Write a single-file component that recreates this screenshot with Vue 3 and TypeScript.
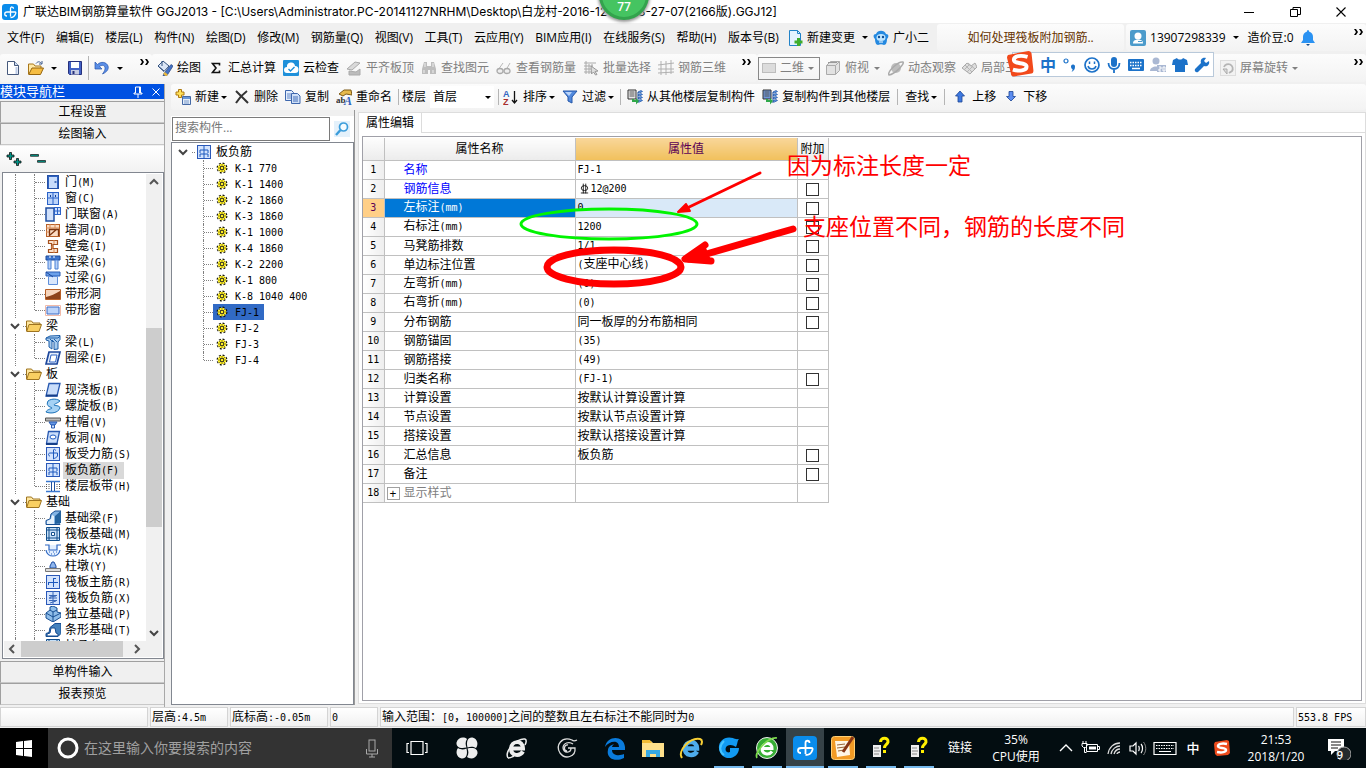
<script setup lang="ts">
import { h, ref } from 'vue'

const blueBox = '<rect x="1.5" y="1.5" width="13" height="13" fill="#d3e3fd" stroke="#2a58b8"/>'
const docFloor = '<path d="M1 1h8v9H1z" fill="#e8e8e8" stroke="#333"/><path d="M2.500 3h5M2.500 5h5M2.500 7h5" stroke="#555"/>'
const stack = '<path d="M11 3l3-1.500 1.500 1-3 1.500zM11 6l3-1.500 1.500 1-3 1.500zM11 9l3-1.500 1.500 1-3 1.500zM11 12l3-1.500 1.500 1-3 1.500z" fill="#5d9be8" stroke="#1b4fa0" stroke-width=".7"/><path d="M11 3v11" stroke="#1b4fa0"/>'

const glyphs: Record<string, string> = {
  app: '<rect width="16" height="16" rx="3" fill="#0a8ceb"/><path d="M8.500 12.500V4.500c0-2 3-2 3 .2M8.500 8H5c-3 0-3 4 0 4M8.500 8H13c1 0 1 1 .5 2-1 2.500-3 3.500-5 3.500" fill="none" stroke="#fff" stroke-width="1.300"/>',
  newdoc: '<path d="M2.500 1.500h7l4 4v9h-11z" fill="#fff" stroke="#46597c"/><path d="M9.500 1.500v4h4" fill="#ccdcf2" stroke="#46597c"/><path d="M11.500 7v7" stroke="#bccbe6" stroke-width="2"/>',
  open: '<path d="M.5 14V4h5l1.500 2h6v3" fill="#ffe9a6" stroke="#a87618"/><path d="M.7 14.500L4 8h11.500l-3 6.500z" fill="#f5bd43" stroke="#96650e"/><path d="M8 3.500c2-2.500 4-2 5.500 0M14 1v3h-3" fill="none" stroke="#3c5b8c"/>',
  save: '<path d="M1.500 1.500h13v13h-12l-1-1z" fill="#4262c5" stroke="#26307c"/><path d="M4 2h8v6H4z" fill="#fff"/><path d="M4 10h8v4.500H4z" fill="#c5cbe2"/><path d="M5.500 11h2v3h-2z" fill="#26307c"/>',
  undo: '<path d="M1 2v7h7L5.500 6.500C9 4 11.500 6 11 9c-.3 2-1.500 3.500-2.500 5C13 12 15 9 14 6 12.500 2 7 1 3.500 4.500z" fill="#5a8ee6" stroke="#2754ae" stroke-width=".7"/>',
  paint: '<path d="M1 6l5-5 6 5-5 5.500z" fill="#dbe6f6" stroke="#31507e"/><path d="M5 1v5M1 6l6 5" stroke="#31507e"/><path d="M7 13.500l7-9 2 1.500-6 9.500-4 .5z" fill="#4472c6" stroke="#24437e" stroke-width=".7"/><path d="M7 13l3 2.500" stroke="#ebb93d" stroke-width="2.500"/>',
  sigma: '<path d="M11.500 5.500V3.500h-7L8 8l-3.500 4.500h7v-2" fill="none" stroke="#111" stroke-width="1.600"/>',
  cloud: '<rect width="16" height="16" rx="1" fill="#1e90da"/><path d="M4 13a3 3 0 010-6 4 4 0 018-1 3.500 3.500 0 010 7z" fill="#fff"/><path d="M5.500 9l2 2 4-4" fill="none" stroke="#1e90da" stroke-width="1.400"/>',
  flush: '<path d="M1 9l8-7 5 1-8 7z" fill="#d9d9d9" stroke="#aaa"/><path d="M3 11v4h11V9l-4 3z" fill="#bcbcbc" stroke="#aaa"/>',
  find: '<path d="M3 2h3v4h4V2h3l2 7v5H9v-4H7v4H1V9z" fill="#bdbdbd"/><path d="M3 10v3M12 10v3M4 3v4M12 3v4" stroke="#eee"/>',
  glasses: '<path d="M2 10L7 3M10 10l4-7" stroke="#b8b8b8"/><ellipse cx="4" cy="11" rx="3" ry="2.500" fill="#eee" stroke="#aaa" stroke-width="1.300"/><ellipse cx="11" cy="11" rx="3" ry="2.500" fill="#eee" stroke="#aaa" stroke-width="1.300"/>',
  batch: '<path d="M1 3h12M1 6h9M1 9h7M1 12h7M3 1v13M6 4v10M9 4v4" stroke="#aaa"/><path d="M8 6l7 5-3 .5 2 3-1.500.5-2-3-2 2z" fill="#ddd" stroke="#999"/>',
  rebar: '<path d="M3 1v14M8 1v14M13 0v14M0 5l16-2M0 9h16M0 13l16-1" stroke="#b0b0b0"/>',
  flat: '<rect x="1.500" y="3.500" width="13" height="9" fill="#dcdcdc" stroke="#bdbdbd"/>',
  cube: '<path d="M1.500 5.500l4-4h9v9l-4 4h-9z" fill="#e2e2e2" stroke="#aaa"/><path d="M1.500 5.500h9v9M10.500 5.500l4-4" fill="none" stroke="#aaa"/><path d="M3 2.500h9" stroke="#999"/>',
  orbit: '<circle cx="8" cy="8" r="5" fill="#bdbdbd"/><path d="M1 15C-1 12 10 1 15 2c2 2-8 12-14 13z" fill="none" stroke="#aaa" stroke-width="1.500"/>',
  local3d: '<path d="M1 8l5-5 4 3 4-3 2 4-7 7z" fill="#ddd" stroke="#aaa"/><path d="M4 5l7 7M7 3l7 6M3 10l6-6M6 12l6-6" stroke="#b5b5b5"/>',
  rotate: '<rect x=".5" y=".5" width="15" height="15" fill="#f2f2f2" stroke="#ddd"/><path d="M4 7a4.500 4.500 0 118 4l-3 2" fill="none" stroke="#b5b5b5" stroke-width="1.800"/><path d="M3 9h4v5z" fill="#ddd" stroke="#aaa"/>',
  change: '<path d="M2.500.5h8l3 3v12h-11z" fill="#e5f3ff" stroke="#2283c8"/><path d="M10.500.5v3h3" fill="none" stroke="#2283c8"/><path d="M10 8h3v2.500h2.500v3H13V16h-3v-2.500H7.500v-3H10z" fill="#3fae2c"/>',
  robot: '<path d="M3 4a5.500 5.500 0 0110 0c3 0 3 3 1 5 0 3-1 6-3 6-2-1-4-1-6 0-2 0-3-3-3-6C0 7 0 4 3 4z" fill="#2489e0"/><ellipse cx="8" cy="7.500" rx="4.500" ry="3.500" fill="#bfe6ff"/><circle cx="6" cy="7" r="1.200" fill="#0f4d93"/><circle cx="10" cy="7" r="1.200" fill="#0f4d93"/><path d="M6 12h4" stroke="#fff"/>',
  avatar: '<rect width="16" height="16" rx="2" fill="#4c9bcb"/><circle cx="8" cy="6" r="3.500" fill="#fff"/><path d="M3 13.500c0-3 2-3.500 4-4h2c2 .5 4 1 4 4z" fill="#fff"/><path d="M8 11.500h4" stroke="#4c9bcb"/>',
  bell: '<path d="M8 0c.8 0 1 .8 1 1.500 3 1 4 3 4 5.500v3l2 3H1l2-3V7c0-2.500 1-4.500 4-5.500C7 .8 7.200 0 8 0z" fill="#2b92f2"/><path d="M6 14h4l-2 2z" fill="#174f8c"/>',
  create: '<path d="M3.500.5h3v2.500h2.500v3H6.500v2.500h-3V6H1V3h2.500z" fill="#ffe15a" stroke="#ae7a12"/><path d="M7.500 7.500h8v8h-8z" fill="#e3edfa" stroke="#4569a5"/><path d="M8 8h7v2H8z" fill="#6796db"/><path d="M9 12h5M9 14h5" stroke="#7a99c8"/>',
  del: '<path d="M2 2c3 3 8 8 12 12M13 2C9 5 5 9 2 14" fill="none" stroke="#333" stroke-width="2"/>',
  copy: '<path d="M.5 1.500h6l2 2v8h-8z" fill="#e3edfb" stroke="#3e67ad"/><path d="M2 5h4M2 7h4M2 9h4" stroke="#6288c8"/><path d="M6.500 4.500h6l2.500 2.500v7.500h-8.500z" fill="#cfe0f8" stroke="#3e67ad"/><path d="M8 8h5M8 10h5M8 12h5" stroke="#456fb8"/>',
  rename: '<path d="M3 5l5-4h7l1 5-6-1-3 2z" fill="#e6b94b" stroke="#7d5a17"/><text x="0" y="14" font-family="Liberation Serif" font-size="9" font-weight="bold" fill="#333">ab</text><text x="8" y="16" font-family="Liberation Serif" font-size="12" font-weight="bold" font-style="italic" fill="#2d62bd">A</text>',
  sort: '<text x="0" y="8" font-family="Liberation Sans" font-size="9" font-weight="bold" fill="#3467c1">A</text><text x="0" y="16" font-family="Liberation Sans" font-size="9" font-weight="bold" fill="#a82e2e">Z</text><path d="M11.500 2v12M9 11l2.500 3 2.500-3" fill="none" stroke="#111" stroke-width="1.300"/>',
  filter: '<path d="M1 2h14L10 8v6l-4-2V8z" fill="#528ade" stroke="#2456a8"/><path d="M3 3h7L7 7z" fill="#b9d4fa"/>',
  from: docFloor + stack + '<path d="M5 10v3h4v2.500l3-3.500-3-3v2H7v-1z" fill="#2fa84a"/>',
  to: docFloor.replace('#e8e8e8', '#6f97dc') + stack + '<path d="M4 10v3h4v2.500l3-3.500-3-3v2H6v-1z" fill="#2fa84a"/>',
  up: '<path d="M8 2l4.500 5h-2.500V13H6V7H3.500z" fill="#3e79e0" stroke="#1c4593" stroke-width=".8"/>',
  down: '<path d="M8 12L3.500 7.500H6V2.500h4v5h2.500z" fill="#5d8df0" stroke="#1c4593" stroke-width=".8"/>',
  search: '<rect width="16" height="16" fill="#e4f1fb"/><circle cx="9.500" cy="6" r="4" fill="#f4fbff" stroke="#3b9ddb" stroke-width="1.700"/><path d="M6.500 9L2 14" stroke="#3b9ddb" stroke-width="2.400"/>',
  folder: '<path d="M.5 13V3h5l1.500 2h7v3" fill="#ffe7a0" stroke="#9e7420"/><path d="M.7 13.500L3 6.500h12.500l-2.500 7z" fill="#f9cf62" stroke="#9e7420"/>',
  door: '<rect x="2.500" y="1.500" width="11" height="13" fill="#2f63c2" stroke="#2450a5"/><rect x="4" y="3" width="8" height="11" fill="#c8dcfb"/><path d="M9.500 8h2" stroke="#2450a5" stroke-width="1.500"/>',
  window: '<rect x="2.500" y="2.500" width="11" height="12" fill="#bcd4fa" stroke="#2b63c8"/><path d="M8 3v11M3 8h10" stroke="#2b63c8"/><path d="M5 6h1M10 6h1" stroke="#123f93" stroke-width="2"/>',
  doorwin: '<rect x="1" y="2" width="8" height="13" fill="#d0e0fb" stroke="#1f4da0" stroke-width="1.500"/><rect x="9.500" y="1.500" width="6" height="7" fill="#cfe1ff" stroke="#2b63c8"/><path d="M12.500 2v6M10 5h5" stroke="#2b63c8"/>',
  wallhole: '<rect x="1.500" y="2.500" width="13" height="12" fill="#fbdcc4" stroke="#b86028"/><path d="M1 6h13M5 2v4M10 2v4M1 10h3" stroke="#d98a55"/><path d="M4.500 14V7.500h9V14M5 13l7-6" fill="none" stroke="#7c3510" stroke-width="1.300"/>',
  niche: '<path d="M3.500 2.500h9v4H8v4h4.500v4h-9v-3h3v-6h-3z" fill="#fbe0cc" stroke="#a6501d" stroke-width="1.200"/><path d="M9 2v4M9 11v4M6 9h3" stroke="#d98a55"/>',
  linkbeam: '<path d="M1 2h14v4H1z" fill="#3c74cf" stroke="#1d4a9c"/><path d="M3 6h3v9H3zM10 6h3v9h-3z" fill="#b9d2f8" stroke="#4a80d4"/><path d="M4 3h2M8 3h2" stroke="#fff"/>',
  lintel: '<path d="M1 2h14v4H1z" fill="#6ba0ea" stroke="#2a5cb4"/><path d="M3.500 6.500h9v8h-9z" fill="#d9e7fc" stroke="#5f8fda"/><path d="M1 2l7 5" stroke="#1d4a9c"/>',
  striphole: '<path d="M.5 3.500h15v10H.5z" fill="#f7d6bd" stroke="#b86028"/><path d="M1 11C6 10 10 8 15 5v8H1z" fill="#8d431a"/>',
  stripwin: '<path d="M.5 3.500h15v10H.5z" fill="#fff" stroke="#f0b9a8"/><path d="M2 5h12v7H2z" fill="#bcd4fa" stroke="#3c6bc4"/>',
  beam: '<path d="M1 4l4-2 10-.5v4L13 8v7l-4 .5V8L7 6v9l-3-2V7L1 6z" fill="#a6cbef" stroke="#1f5fa8"/><path d="M1 4h12l2-2M5 5l3 3M9 5l3 3" fill="none" stroke="#1f5fa8"/>',
  ring: '<path d="M4 2h11l-3 12H1z" fill="#e6effc" stroke="#1d479c" stroke-width="1.700"/><path d="M6 5h6l-1.500 7h-6z" fill="#fff" stroke="#2f63c2"/>',
  slab: '<path d="M4 1.500h11L12 14H1z" fill="#c9ddfa" stroke="#2758b0" stroke-width="1.300"/><path d="M1 13.500h11.500" stroke="#163f8a" stroke-width="2"/>',
  spiral: '<path d="M3 3c4-3 10-2 12 0-2 2-6 3-6 4s6 0 6 3c-2 5-9 6-14 4 1-3 6-3 6-4S0 9 3 3z" fill="#a5d2f5" stroke="#1a71b9"/>',
  cap: '<path d="M.5 4h15v3H.5z" fill="#bbb" stroke="#555"/><path d="M4 8h8l-2 3H6z" fill="#699be6" stroke="#2a5cb4"/><path d="M6.500 11h3v3h-3z" fill="#d5e5fb" stroke="#2a5cb4"/>',
  hole: '<path d="M3.500 1.500h11L12 13.500H1.500z" fill="#c9ddfa" stroke="#2758b0" stroke-width="1.300"/><ellipse cx="8" cy="7" rx="3" ry="2" fill="#fff" stroke="#1d5bc4"/><path d="M1 14h11.500" stroke="#163f8a" stroke-width="2"/>',
  mainbar: blueBox + '<path d="M8.500 13V4c0-1 2-1 2 .5M8.500 7H5c-2 0-2 3 0 3M8.500 7h4v3c-1 2-3 2-4 3" fill="none" stroke="#1d58bd"/>',
  negbar: blueBox + '<path d="M8 1v14M4 9V6h8v3M4 13v-3h8v3" fill="none" stroke="#1d58bd"/>',
  strip: '<path d="M1 3.500h14M1 13.500h14" stroke="#3b78cf" stroke-width="1.600"/><path d="M6.500 4v9M9.500 4v9" stroke="#1f519f"/><path d="M1.500 6v6M4 6v6M12 6v6M14.500 6v6" stroke="#555" stroke-dasharray="1 1"/>',
  fbeam: '<path d="M1 14.500v-4L5 9l1-5 4-3h6l-3 4v7l2 2.500z" fill="#82b3e4" stroke="#174e92"/><path d="M10 14V6l6-5v12z" fill="#23639f"/><path d="M2 14v-3l4-2 1-4 2 1v8z" fill="#e6f2fc"/>',
  raft: '<path d="M1.500 1.500h13v13h-13z" fill="#c7e0f7" stroke="#124f8c"/><path d="M4 1v14M12 1v14M1 4h14M1 12h14" stroke="#124f8c"/><path d="M6.500 6.500h3v3h-3z" fill="#fff" stroke="#124f8c"/>',
  pit: '<path d="M0 3h4v5h8V3h4M1 8c1 8 13 8 14 0" fill="#e2efff" stroke="#2e67c2" stroke-width="1.200"/><path d="M4 10h1M8 10h1M11 10h1M6 12h1M9 12h1" stroke="#2e67c2"/>',
  pier: '<path d="M5 10V8l2-4h2l2 4v2z" fill="#8db5ed" stroke="#1f4da0"/><path d="M.5 10.500h15v3H.5z" fill="#ddd" stroke="#777"/>',
  raftmain: blueBox + '<path d="M8.500 4v9M3 8.500h10M3.500 8v3M8 4.500h3" fill="none" stroke="#1d58bd"/>',
  raftneg: blueBox + '<path d="M8 1v14M4 5.500h8M4 10.500h8M5 9V7l6-1M5 13l6-2M4 8h8" fill="none" stroke="#3b69b8"/>',
  isolated: '<path d="M1 7l4-3V1l3-1 4 2v4l4 1v4l-8 5-7-4z" fill="#8fbde9" stroke="#174e92"/><path d="M1 7l7 4 8-4M8 11v5M5 4l3 2 4-2M8 6v5" fill="none" stroke="#174e92"/>',
  stripf: '<path d="M1 14.500v-3l3-1 1-5 5-4h6v10l-3 3z" fill="#4582bd" stroke="#174e92"/><path d="M2 14v-2l3-1 1-5h4l1 5 2 1v2z" fill="#fff" stroke="#174e92"/>',
  node: '<circle cx="8" cy="8" r="4.800" fill="none" stroke="#111" stroke-width="1.300" stroke-dasharray="2 1.770"/><circle cx="8" cy="8" r="3.500" fill="#fff23a" stroke="#ffee20" stroke-width="1.600"/><path d="M8 4v8M4 8h8M5 5l6 6M11 5l-6 6" stroke="#77701a" stroke-width=".8"/><path d="M6.500 6.500h3v3h-3z" fill="#ffee20" stroke="#222" stroke-width=".8"/>',
  plus: '<path d="M3.500 1.500h2v2.500h2.500v2H5.500v2.500h-2V6H1V4h2.500zM10.500 7.500h2V10H15v2h-2.500v2.500h-2V12H8v-2h2.500z" fill="#009688" stroke="#111" stroke-width=".8"/>',
  minus: '<path d="M.5 3.500h8v1.800h-8zM7.500 9.500h8v1.800h-8z" fill="#009688" stroke="#111" stroke-width=".7"/>',
  pin: '<path d="M5.500 3h5v6H12v1H4V9h1.500zM8 10v4" fill="none" stroke="#fff"/><path d="M9.500 3v6" stroke="#fff"/>',
  x12: '<path d="M4.500 4.500l7 7M11.500 4.500l-7 7" stroke="currentColor"/>',
  more: '<path d="M0 1h2l2 3-2 3H0l2-3zM5 1h2l2 3-2 3H5l2-3z" fill="#000"/>',
  chevD: '<path d="M4 6l4 4 4-4" fill="none" stroke="#444" stroke-width="2"/>',
  chevU: '<path d="M4 10l4-4 4 4" fill="none" stroke="#555" stroke-width="2"/>',
  chevL: '<path d="M10 4L6 8l4 4" fill="none" stroke="#555" stroke-width="2"/>',
  chevR: '<path d="M6 4l4 4-4 4" fill="none" stroke="#555" stroke-width="2"/>',
  min: '<path d="M0 8.500h10" stroke="#000"/>',
  restore: '<path d="M.5 5.500h7v7h-7zM3 5V3.500h7.500v7H8" fill="none" stroke="#000"/>',
  close: '<path d="M.5 3.500l9 9M9.500 3.500l-9 9" stroke="#000" stroke-width="1.100"/>',
  // input-method bar
  sogou: '<g transform="scale(.58)"><path d="M1 5L22 1q2 0 3 2l2 18q0 3-2 3L7 27q-3 0-3-3L0 8q0-2 1-3z" fill="#f2491b"/><path d="M21 7C14 5 7 6 7 10c0 5 13 2 13 7 0 4-8 5-14 3" fill="none" stroke="#fff" stroke-width="4"/></g>',
  punct: '<circle cx="4" cy="4" r="2" fill="none" stroke="#1c72c9" stroke-width="1.200"/><path d="M9 9a2 2 0 114 1c0 3-2 4-3.500 5 1-1.500 1-2 1-3-1 0-1.500-1-1.500-3z" fill="#1c72c9"/>',
  smile: '<circle cx="8" cy="8" r="7" fill="none" stroke="#1c72c9" stroke-width="1.700"/><path d="M5.500 4.500v2.500M10.500 4.500v2.500M4 9c1 4 7 4 8 0" fill="none" stroke="#1c72c9" stroke-width="1.500"/>',
  mic: '<rect x="5" y="0" width="6" height="10" rx="3" fill="#1c72c9"/><path d="M2.500 6c0 8 11 8 11 0M8 12v4" fill="none" stroke="#1c72c9" stroke-width="1.800"/>',
  kb: '<rect x="0" y="2" width="16" height="12" rx="1" fill="#1c72c9"/><path d="M2 5.500h12M2 8.500h12" stroke="#fff" stroke-width="1.500" stroke-dasharray="1.500 1"/><path d="M4 11.500h8" stroke="#fff" stroke-width="1.500"/>',
  person: '<circle cx="6" cy="4" r="3.500" fill="#aab8d3"/><path d="M0 14c0-6 12-6 12 0z" fill="#aab8d3"/><path d="M7 8h9v7H7z" fill="#aab8d3"/><path d="M9 10h2v2H9v2h2M13 10v4h2v-4z" fill="none" stroke="#fff"/>',
  shirt: '<path d="M1 3l4-2c1 2 5 2 6 0l4 2 1 5h-3v7H3V8H0z" fill="#1c72c9"/>',
  wrench: '<path d="M15 4l-3 2-2-2 2-3C8 0 6 3 7 6L1 12c-1 2 1 4 3 3l6-6c3 1 6-1 5-5z" fill="#1c72c9"/>',
  // third-grade rebar diameter sign
  grade: '<path d="M6.500 2v12M9.500 2v12M3.500 13.500h9" stroke="#000" fill="none"/><ellipse cx="8" cy="7.500" rx="4" ry="3" fill="none" stroke="#000"/>',
}

const bigGlyphs: Record<string, string> = {
  win: '<path d="M4 6l7-1v7H4zM12 5l8-1v8h-8zM4 13h7v7l-7-1zM12 13h8v8l-8-1z" fill="#fff"/>',
  ring: '<circle cx="12" cy="12" r="9" fill="none" stroke="#fff" stroke-width="3"/>',
  mic: '<rect x="9" y="4" width="6" height="11" fill="none" stroke="#aaa"/><path d="M6.500 13v5h11v-5M12 18v3M9 21h6" fill="none" stroke="#aaa"/>',
  task: '<path d="M6 5.500h12v13H6zM4 7.500H2v9h2M20 7.500h2v9h-2" fill="none" stroke="#fff" stroke-width="1.200"/>',
  fan: '<path d="M11.500 11.500C5 13 1 11 1.500 6.500 3 1 9 .5 12 3c-2 3-1.500 6-.5 8.500zM12.500 11.500C11 5 13 1 17.500 1.500 23 3 23.500 9 21 12c-3-2-6-1.500-8.500-.5zM12.500 12.500c6.500-1.500 10.500.5 10 5C21 23 15 23.500 12 21c2-3 1.500-6 .5-8.500zM11.500 12.500c1.500 6.500-.5 10.500-5 10C1 21 .5 15 3 12c3 2 6 1.500 8.500.5z" fill="#eee"/>',
  ieWhite: '<path d="M5 12.500h13c0-9-12-8-12 0 0 8 9 8 12 3" fill="none" stroke="#eee" stroke-width="4"/><path d="M3 22c-4-7 9-20 17-19M3 22c3 0 4-1 6-2M20 3c2 1 1 4 0 6" fill="none" stroke="#eee" stroke-width="1.500"/>',
  swirl: '<path d="M22 4c-2 1-4 1-5 0C7 0 0 9 5 17c5 7 16 4 15-5h-7M16 12c0 5-7 6-8 0 0-5 6-7 10-4M13 9c-4-1-5 6-1 6" fill="none" stroke="#ddd" stroke-width="1.300"/>',
  edge: '<path d="M2 11C4-1 21-1 22 11v3H9c0 6 8 6 12 4v4C11 27 3 21 5 14c0-3 3-5 6-6-2 2-2 3-2 3h7c0-8-10-6-14 0z" fill="#0a7bdc"/>',
  explorer: '<path d="M1 5h9l2 2h11v14H1z" fill="#ffe08b"/><path d="M1 4h8l2 3H1z" fill="#f2bb35"/><path d="M5 21v-7h14v7h-4v-3H9v3z" fill="#38a9e4"/>',
  ie: '<path d="M5 12.500h13c0-9-12-8-12 0 0 8 9 8 12 3" fill="none" stroke="#4eacec" stroke-width="4.500"/><path d="M3 22C-2 15 11 1 21 3c3 1 2 4 1 6" fill="none" stroke="#f8cf35" stroke-width="2"/>',
  swirlBlue: '<path d="M23 2c-2 2-5 1-7 0C6-1-1 8 3 16c4 10 19 7 19-4h-9v4c-4 2-6-3-3-6 3-2 6-1 9 1 2-4 1-7 4-9z" fill="#119af2"/><path d="M7 5c-5 5-5 10 0 14" fill="none" stroke="#47c4ff" stroke-width="2"/>',
  ieGreen: '<circle cx="12" cy="12" r="10.500" fill="#37ae35" stroke="#eee"/><path d="M7 12.500h10c0-7-9-6-10 0 0 6 7 7 10 3" fill="none" stroke="#fff" stroke-width="3"/><path d="M2 22C-1 17 12 1 22 2" fill="none" stroke="#7cdb4e" stroke-width="1.700"/>',
  bim: '<rect x="0" y="0" width="24" height="24" rx="4" fill="#0a8ceb"/><path d="M12.500 18V7c0-3 4-3 4 0M12.500 12H8c-4 0-4 5 0 5M12.500 12H18c2 0 2 1 1 3-1 3-4 4-6.500 4" fill="none" stroke="#fff" stroke-width="1.800"/>',
  note: '<rect x=".5" y=".5" width="23" height="23" rx="3" fill="#f29b25" stroke="#ffd075"/><path d="M4 5h14l1 14-13 2z" fill="#fff6e5"/><path d="M6 9l8-1M6 12l8-1M7 15l6-1" stroke="#98653a"/><path d="M22 1L12 16" stroke="#873414" stroke-width="3"/>',
  help: '<path d="M4 9h8v12H4z" fill="#eee"/><path d="M5 12h5M5 15h6M5 18h5" stroke="#888"/><path d="M11.500 6c0-5 8-5 7.500 0-1 3-3.500 2.500-3.500 6" fill="none" stroke="#ffee00" stroke-width="3"/><path d="M14 14h3v3h-3z" fill="#ffee00"/>',
  up: '<path d="M6 15l6-6 6 6" fill="none" stroke="#fff" stroke-width="1.400"/>',
  battery: '<path d="M8.500 8.500h11v7h-11zM20 10.500h1.500v3H20" fill="none" stroke="#fff"/><path d="M11 10.500h7v3h-7z" fill="#fff"/><path d="M5 5v2M8 5v2M4 7.500h5V10l-1.500 1.500h-2L4 10zM6.500 12v4.500h2" fill="none" stroke="#fff"/>',
  wifi: '<path d="M6 18C7 11 12 7 18 7M9 18c1-5 5-8 9-8M12 18c1-3 3-5 6-5M15 18c0-1 2-2 3-2" fill="none" stroke="#ddd" stroke-width="1.300"/>',
  sound: '<path d="M4 10h3l3-3v11l-3-3H4zM12.500 10c1 1 1 4 0 5M15 8c2 2 2 7 0 9" fill="none" stroke="#fff" stroke-width="1.200"/><path d="M17.500 6c3 4 3 9 0 13" fill="none" stroke="#888"/>',
  keyboard: '<path d="M1 6.500h22v12H1z" fill="none" stroke="#fff" stroke-width="1.200"/><path d="M3 9.500h18M3 12.500h18" stroke="#fff" stroke-dasharray="1.500 1"/><path d="M6 15.500h12" stroke="#fff"/>',
  sogou: '<path d="M5 6l12-2 2 1 1 12-2 2-11 1-2-2L4 8z" fill="#ee4b1c"/><path d="M17 8c-5-1-9 0-9 2 0 3 8 1 8 4 0 2-4 3-9 2" fill="none" stroke="#fff" stroke-width="2.500"/>',
  notice: '<path d="M1 3h16v12H8l-4 4v-4H1z" fill="#fff"/><path d="M4 6h10M4 9h10M4 12h7" stroke="#111"/><circle cx="17" cy="18" r="7" fill="#252a2d" stroke="#aaa"/>',
}

const Ico = (p: { n: string }) =>
  h('svg', { class: 'ico', viewBox: '0 0 16 16', 'aria-hidden': 'true', innerHTML: glyphs[p.n] })
Ico.props = ['n']
const Big = (p: { n: string }) =>
  h('svg', { class: 'big', viewBox: '0 0 24 24', 'aria-hidden': 'true', innerHTML: bigGlyphs[p.n] })
Big.props = ['n']

// Ideographs keep the full size, Latin runs get a half-width monospaced face.
const Sim = (p: { t: string }) =>
  h('span', { class: 'sim' }, p.t.split(/([\x20-\x7e]+)/).filter(Boolean).map(s =>
    /^[\x20-\x7e]/.test(s) ? h('span', { class: 'lat' }, s) : s))
Sim.props = ['t']

const menus = ['文件(F)', '编辑(E)', '楼层(L)', '构件(N)', '绘图(D)', '修改(M)', '钢筋量(Q)', '视图(V)', '工具(T)', '云应用(Y)', 'BIM应用(I)', '在线服务(S)', '帮助(H)', '版本号(B)']

interface Tool { icon: string; label: string; off?: boolean; drop?: boolean }
const drawTools: Tool[] = [
  { icon: 'paint', label: '绘图' }, { icon: 'sigma', label: '汇总计算' }, { icon: 'cloud', label: '云检查' },
  { icon: 'flush', label: '平齐板顶', off: true }, { icon: 'find', label: '查找图元', off: true },
  { icon: 'glasses', label: '查看钢筋量', off: true }, { icon: 'batch', label: '批量选择', off: true },
  { icon: 'rebar', label: '钢筋三维', off: true },
]
const editTools: Tool[] = [
  { icon: 'create', label: '新建', drop: true }, { icon: 'del', label: '删除' },
  { icon: 'copy', label: '复制' }, { icon: 'rename', label: '重命名' },
]

interface Node { label: string; icon?: string; group?: boolean; sel?: boolean; last?: boolean }
const tree: Node[] = [
  { label: '门(M)', icon: 'door' }, { label: '窗(C)', icon: 'window' }, { label: '门联窗(A)', icon: 'doorwin' },
  { label: '墙洞(D)', icon: 'wallhole' }, { label: '壁龛(I)', icon: 'niche' }, { label: '连梁(G)', icon: 'linkbeam' },
  { label: '过梁(G)', icon: 'lintel' }, { label: '带形洞', icon: 'striphole' }, { label: '带形窗', icon: 'stripwin', last: true },
  { label: '梁', group: true }, { label: '梁(L)', icon: 'beam' }, { label: '圈梁(E)', icon: 'ring', last: true },
  { label: '板', group: true }, { label: '现浇板(B)', icon: 'slab' }, { label: '螺旋板(B)', icon: 'spiral' },
  { label: '柱帽(V)', icon: 'cap' }, { label: '板洞(N)', icon: 'hole' }, { label: '板受力筋(S)', icon: 'mainbar' },
  { label: '板负筋(F)', icon: 'negbar', sel: true }, { label: '楼层板带(H)', icon: 'strip', last: true },
  { label: '基础', group: true }, { label: '基础梁(F)', icon: 'fbeam' }, { label: '筏板基础(M)', icon: 'raft' },
  { label: '集水坑(K)', icon: 'pit' }, { label: '柱墩(Y)', icon: 'pier' }, { label: '筏板主筋(R)', icon: 'raftmain' },
  { label: '筏板负筋(X)', icon: 'raftneg' }, { label: '独立基础(P)', icon: 'isolated' }, { label: '条形基础(T)', icon: 'stripf' },
  { label: '桩承台(V)', icon: 'raft' },
]

const parts = ['K-1 770', 'K-1 1400', 'K-2 1860', 'K-3 1860', 'K-1 1000', 'K-4 1860', 'K-2 2200', 'K-1 800', 'K-8 1040 400', 'FJ-1', 'FJ-2', 'FJ-3', 'FJ-4']
const current = ref('FJ-1')

interface Row { name: string; value: string; box?: boolean; key?: boolean; grade?: boolean }
const rows: Row[] = [
  { name: '名称', value: 'FJ-1', key: true }, { name: '钢筋信息', value: '12@200', box: true, key: true, grade: true },
  { name: '左标注(mm)', value: '0', box: true }, { name: '右标注(mm)', value: '1200', box: true },
  { name: '马凳筋排数', value: '1/1', box: true }, { name: '单边标注位置', value: '(支座中心线)', box: true },
  { name: '左弯折(mm)', value: '(0)', box: true }, { name: '右弯折(mm)', value: '(0)', box: true },
  { name: '分布钢筋', value: '同一板厚的分布筋相同', box: true }, { name: '钢筋锚固', value: '(35)' },
  { name: '钢筋搭接', value: '(49)' }, { name: '归类名称', value: '(FJ-1)', box: true },
  { name: '计算设置', value: '按默认计算设置计算' }, { name: '节点设置', value: '按默认节点设置计算' },
  { name: '搭接设置', value: '按默认搭接设置计算' }, { name: '汇总信息', value: '板负筋', box: true },
  { name: '备注', value: '', box: true }, { name: '显示样式', value: '' },
]

const apps = [
  { n: 'edge', t: 'Edge' }, { n: 'explorer', t: '文件资源管理器' }, { n: 'ie', t: 'Internet Explorer' },
  { n: 'swirlBlue', t: '浏览器', run: true }, { n: 'ieGreen', t: '安全浏览器', run: true },
  { n: 'bim', t: '钢筋算量', active: true }, { n: 'note', t: '便笺', run: true },
  { n: 'help', t: '帮助', run: true }, { n: 'help', t: '帮助', run: true },
]
</script>

<template>
  <div class="desk">
    <header class="title">
      <Ico n="app" />
      <h1>广联达BIM钢筋算量软件 GGJ2013 - [C:\Users\Administrator.PC-20141127NRHM\Desktop\白龙村-2016-12-05-13-27-07(2166版).GGJ12]</h1>
      <div class="winbtns">
        <button aria-label="最小化"><Ico n="min" /></button>
        <button aria-label="还原"><Ico n="restore" /></button>
        <button aria-label="关闭"><Ico n="close" /></button>
      </div>
      <div class="ball">77</div>
    </header>

    <div class="menubar">
      <nav class="menus"><button v-for="m in menus" :key="m">{{ m }}</button></nav>
      <button class="tool"><Ico n="change" /><span>新建变更</span><i class="drop far"></i></button>
      <button class="tool robot"><Ico n="robot" /><span>广小二</span></button>
      <div class="band tip"><a href="#">如何处理筏板附加钢筋..</a></div>
      <div class="band user">
        <button class="tool"><Ico n="avatar" /><span>13907298339</span><i class="drop far"></i></button>
        <button class="bean">造价豆:0</button>
        <button class="tool" aria-label="消息"><Ico n="bell" /></button>
        <button class="tool more" aria-label="更多"><Ico n="more" /></button>
      </div>
    </div>

    <div class="bars">
      <div class="band files">
        <button class="tool" aria-label="新建文件"><Ico n="newdoc" /></button>
        <button class="tool" aria-label="打开"><Ico n="open" /><i class="drop far"></i></button>
        <button class="tool" aria-label="保存"><Ico n="save" /></button>
        <i class="sep"></i>
        <button class="tool" aria-label="撤销"><Ico n="undo" /><i class="drop far"></i></button>
        <button class="tool more" aria-label="更多"><Ico n="more" /></button>
      </div>
      <div class="band draw">
        <button v-for="t in drawTools" :key="t.label" class="tool" :class="{ off: t.off }"><Ico :n="t.icon" /><span>{{ t.label }}</span></button>
        <button class="tool more" aria-label="更多"><Ico n="more" /></button>
      </div>
      <div class="band view">
        <button class="tool off boxed"><Ico n="flat" /><span>二维</span><i class="drop far"></i></button>
        <button class="tool off"><Ico n="cube" /><span>俯视</span><i class="drop far"></i></button>
        <button class="tool off"><Ico n="orbit" /><span>动态观察</span></button>
        <button class="tool off"><Ico n="local3d" /><span>局部三维</span></button>
        <button class="tool off spin"><Ico n="rotate" /><span>屏幕旋转</span><i class="drop"></i></button>
        <button class="tool more" aria-label="更多"><Ico n="more" /></button>
      </div>
      <div class="ime">
        <Ico n="sogou" class="logo" /><b>中</b><Ico n="punct" /><Ico n="smile" /><Ico n="mic" /><Ico n="kb" /><Ico n="person" /><Ico n="shirt" /><Ico n="wrench" />
      </div>
    </div>

    <main class="work">
      <aside class="nav">
        <div class="navhead"><span>模块导航栏</span><button aria-label="固定"><Ico n="pin" /></button><button aria-label="关闭"><Ico n="x12" /></button></div>
        <button class="slot">工程设置</button>
        <button class="slot">绘图输入</button>
        <div class="expand"><button aria-label="全部展开"><Ico n="plus" /></button><button aria-label="全部折叠"><Ico n="minus" /></button></div>
        <div class="treebox">
          <div class="treemain">
            <ul class="tree">
              <li v-for="(n, i) in tree" :key="i" :class="{ group: n.group, last: n.last }">
                <template v-if="n.group"><span class="arrow"><Ico n="chevD" /></span><i class="dots"></i><Ico n="folder" /></template>
                <template v-else><i class="g1"></i><i class="g2"></i><i class="g3"></i><Ico :n="n.icon" /></template>
                <Sim class="lbl" :class="{ sel: n.sel }" :t="n.label" />
              </li>
            </ul>
            <div class="vbar"><Ico n="chevU" /><i></i><Ico n="chevD" /></div>
          </div>
          <div class="hbar"><Ico n="chevL" /><i></i><Ico n="chevR" /></div>
        </div>
        <button class="slot">单构件输入</button>
        <button class="slot">报表预览</button>
      </aside>

      <div class="right">
        <div class="band edit">
          <button v-for="t in editTools" :key="t.label" class="tool"><Ico :n="t.icon" /><span>{{ t.label }}</span><i v-if="t.drop" class="drop"></i></button>
          <i class="sep tight"></i>
          <label class="floor"><span>楼层</span><span class="pick"><select><option>首层</option></select><i class="drop"></i></span></label>
          <i class="sep"></i>
          <button class="tool"><Ico n="sort" /><span>排序</span><i class="drop"></i></button>
          <button class="tool"><Ico n="filter" /><span>过滤</span><i class="drop"></i></button>
          <i class="sep tight"></i>
          <button class="tool"><Ico n="from" /><span>从其他楼层复制构件</span></button>
          <button class="tool"><Ico n="to" /><span>复制构件到其他楼层</span></button>
          <i class="sep"></i>
          <button class="tool"><span>查找</span><i class="drop"></i></button>
          <i class="sep"></i>
          <button class="tool"><Ico n="up" /><span>上移</span></button>
          <button class="tool"><Ico n="down" /><span>下移</span></button>
        </div>

        <div class="panes">
          <section class="comps">
            <div class="find"><input type="text" placeholder="搜索构件..." aria-label="搜索构件"><button aria-label="搜索"><Ico n="search" /></button></div>
            <div class="list">
              <div class="root"><Ico n="chevD" /><i></i><Ico n="negbar" /><Sim t="板负筋" /></div>
              <ul>
                <li v-for="p in parts" :key="p" :class="{ on: p === current }" @click="current = p"><i class="v"></i><i class="hz"></i><span class="hit"><Ico n="node" /><Sim :t="p" /></span></li>
              </ul>
            </div>
          </section>

          <section class="props">
            <div class="tabs"><button>属性编辑</button></div>
            <div class="sheet">
              <table>
                <thead><tr><th class="no"></th><th class="nm">属性名称</th><th class="val">属性值</th><th class="add">附加</th></tr></thead>
                <tbody>
                  <tr v-for="(r, i) in rows" :key="i" :class="{ cur: i === 2, key: r.key, more: i === 17 }">
                    <th scope="row"><Sim :t="String(i + 1)" /></th>
                    <td class="name"><button v-if="i === 17" aria-label="展开">+</button><Sim :t="r.name" /></td>
                    <td class="value"><Ico v-if="r.grade" n="grade" class="grade" /><Sim :t="r.value" /></td>
                    <td class="tick"><input v-if="r.box" type="checkbox" :aria-label="'附加 ' + r.name"></td>
                  </tr>
                </tbody>
              </table>
              <svg class="marks" viewBox="0 0 800 200" aria-hidden="true">
                <ellipse cx="246" cy="87" rx="88" ry="15" fill="none" stroke="#00f400" stroke-width="3" />
                <ellipse cx="251" cy="130" rx="67" ry="17" fill="none" stroke="#f00" stroke-width="7" />
                <g stroke="#f00" fill="#f00" stroke-linecap="round" stroke-linejoin="round">
                  <path d="M397 36L322 72" stroke-width="3" />
                  <path d="M315 75l8-8 4 7z" stroke-width="2" />
                  <path d="M430 92L326 122" stroke-width="7" />
                  <path d="M342 108L322 122l26 2" stroke-width="7" />
                  <path d="M322 122l18-10 6 10z" stroke-width="3" />
                </g>
              </svg>
              <p class="memo one">因为标注长度一定</p>
              <p class="memo two">支座位置不同，钢筋的长度不同</p>
            </div>
          </section>
        </div>
      </div>
    </main>

    <footer class="status">
      <span class="c1"></span><span class="c2"><Sim t="层高:4.5m" /></span><span class="c3"><Sim t="底标高:-0.05m" /></span><span class="c4"><Sim t="0" /></span>
      <span class="c5"><Sim t="输入范围：[0，100000]之间的整数且左右标注不能同时为0" /></span><span class="c6"><Sim t="553.8 FPS" /></span>
    </footer>

    <div class="taskbar">
      <button class="start" aria-label="开始"><Big n="win" /></button>
      <div class="cortana"><Big n="ring" /><input type="text" placeholder="在这里输入你要搜索的内容" aria-label="搜索"><Big n="mic" /></div>
      <button class="wide" aria-label="任务视图"><Big n="task" /></button>
      <button class="wide" aria-label="应用"><Big n="fan" /></button>
      <button class="wide" aria-label="浏览器"><Big n="ieWhite" /></button>
      <button class="wide" aria-label="G+"><Big n="swirl" /></button>
      <div class="apps">
        <button v-for="(a, i) in apps" :key="i" class="app" :class="{ run: a.run, active: a.active }" :aria-label="a.t"><Big :n="a.n" /></button>
      </div>
      <span class="links">链接</span>
      <span class="cpu"><span>35%</span><span>CPU使用</span></span>
      <div class="tray"><Big n="up" /><Big n="battery" /><Big n="wifi" /><Big n="sound" /><Big n="keyboard" class="keys" /><b>中</b><Big n="sogou" /></div>
      <span class="clock"><span>21:53</span><span>2018/1/20</span></span>
      <button class="notice" aria-label="通知"><Big n="notice" /><em>9</em></button>
    </div>
  </div>
</template>

<style>
html, body { margin: 0; background: #f0f0f0; }
.ico { width: 16px; height: 16px; flex: none; display: block; }
.big { width: 24px; height: 24px; flex: none; display: block; }
.sim { white-space: pre; }
.sim .lat { font-family: "DejaVu Sans Mono", "Liberation Mono", monospace; font-size: 10px; }
</style>

<style scoped>
.desk { min-height: 100vh; display: flex; flex-direction: column; overflow: hidden; position: relative; background: #f0f0f0; color: #000; font: 12px/16px "Open Sans", "Noto Sans CJK SC", sans-serif; }
* { box-sizing: border-box; }
button { font: inherit; color: inherit; background: none; border: 0; padding: 0; margin: 0; white-space: nowrap; }
ul { list-style: none; margin: 0; padding: 0; }
.title { height: 23px; background: #fff; display: flex; align-items: center; padding-left: 2px; }
.title h1 { font: 400 12px/16px Inter, "Noto Sans CJK SC", sans-serif; margin: 0 0 0 5px; flex: 1; white-space: nowrap; }
.winbtns { display: flex; gap: 30px; padding-right: 14px; }
.winbtns .ico { overflow: visible; }
.ball { position: absolute; left: 599px; top: -30px; width: 50px; height: 50px; border-radius: 50%; background: #45c461; border: 3px solid #33a34d; box-shadow: 0 1px 3px 1px #999; color: #fff; font-size: 12px; font-weight: 600; text-align: center; padding-top: 26px; }

.tool { display: flex; align-items: center; gap: 4px; }
.off { color: #808080; }
.drop { width: 0; height: 0; border: 3px solid transparent; border-top-color: currentColor; border-bottom: 0; }
.drop.far { margin: 0 3px; }
.sep { width: 1px; height: 16px; background: #b5b5b5; }
.band { display: flex; align-items: center; gap: 7px; background: linear-gradient(#fcfcfc, #f3f3f3); border-radius: 3px; }
.more { align-self: flex-start; margin-left: auto; }
.more .ico { overflow: visible; }

.menubar { height: 31px; display: flex; align-items: center; padding-bottom: 2px; }
.menus { flex: 0 0 772px; margin-left: 7px; margin-right: 8px; display: flex; justify-content: space-between; }
.robot { margin: 0 8px 0 2px; }
.menubar .band { height: 27px; }
.tip { flex: 0 0 187px; justify-content: center; margin-right: 2px; }
.tip a { color: #630; text-decoration: none; }
.user { flex: 1; padding-left: 4px; }
.bean { margin: 0 -1px; }
.user .more { margin-right: -4px; padding-top: 4px; }

.bars { height: 30px; display: flex; align-items: flex-start; position: relative; }
.bars .band { height: 28px; }
.files { flex: 0 0 152px; padding-left: 5px; }
.files .sep { height: 24px; margin: 0 -2px; }
.files .more, .draw .more, .view .more { padding-top: 4px; }
.draw { flex: 0 0 605px; padding-left: 5px; }
.files .more { margin-right: -4px; }
.draw .more { margin-right: -1px; }
.view { flex: 1; padding-left: 1px; gap: 5px; }
.view .more { margin-right: -4px; }
.view .drop.far { margin: 0 3px 0 1px; }
.view .boxed { border: 1px solid #888; height: 23px; padding: 0 0 0 2px; width: 62px; gap: 3px; }
.spin { margin-left: 186px; }
.ime { position: absolute; left: 1012px; top: -2px; width: 202px; height: 25px; background: #fff; border: 1px solid #b9c9da; display: flex; align-items: center; gap: 6px; padding: 0 4px 0 27px; color: #1c72c9; }
.ime b { font-size: 16px; line-height: 18px; }
.ime .logo { position: absolute; left: -6px; top: -3px; width: 27px; height: 27px; }

.work { flex: 1; display: flex; min-height: 0; }
.nav { flex: 0 0 165px; margin-right: 6px; display: flex; flex-direction: column; border-right: 1px solid #a8a8a8; padding-bottom: 2px; }
.navhead { height: 15px; background: #0051e2; color: #fff; font-size: 13px; line-height: 15px; display: flex; align-items: center; gap: 2px; margin-bottom: 2px; }
.navhead span { flex: 1; }
.slot { height: 22px; border: 1px solid #a0a0a0; border-right: 0; border-bottom-color: #c8c8c8; background: #f0f0f0; text-align: center; flex: none; }
.expand { height: 26px; display: flex; align-items: center; gap: 8px; padding-left: 6px; background: linear-gradient(#fff, #f2f2f2); margin-top: 1px; flex: none; }
.treebox { flex: 1 1 0; min-height: 0; margin: 0 0 2px 2px; border: 1px solid #828790; background: #fff; display: flex; flex-direction: column; overflow: hidden; padding: 1px; }
.treemain { flex: 1; min-height: 0; display: flex; overflow: hidden; }
.tree { flex: 1; min-width: 0; }
.tree li { height: 16px; display: flex; align-items: center; line-height: 16px; }
.tree .g1 { width: 1px; height: 16px; margin-left: 11px; border-left: 1px dotted #808080; }
.tree .g2 { width: 1px; height: 16px; margin-left: 18px; border-left: 1px dotted #808080; }
.tree .last .g2 { height: 8px; align-self: flex-start; }
.tree .g3 { width: 10px; border-top: 1px dotted #808080; }
.tree .lbl { margin-left: 2px; padding: 0 5px 0 2px; }
.tree .lbl.sel { background: #d9d9d9; }
.tree .arrow { margin-left: 3px; width: 16px; }
.tree .dots { width: 3px; border-top: 1px dotted #808080; }
.vbar { width: 16px; background: #f0f0f0; display: flex; flex-direction: column; align-items: center; flex: none; }
.vbar i { width: 16px; height: 199px; background: #cdcdcd; margin-top: auto; margin-bottom: 98px; }
.hbar { height: 16px; background: #f0f0f0; display: flex; flex: none; }
.hbar i { flex: 0 0 102px; background: #cdcdcd; margin: 0 6px 0 1px; }

.right { flex: 1; min-width: 0; display: flex; flex-direction: column; }
.edit { height: 26px; padding-left: 4px; flex: none; }
.edit .drop { margin-left: -2px; }
.edit .tight { margin: 0 -1px; }
.floor { display: flex; align-items: center; gap: 4px; margin-left: -3px; }
.pick { display: flex; align-items: center; background: #fff; width: 64px; height: 22px; padding-right: 3px; }
.pick select { appearance: none; border: 0; background: none; font: inherit; flex: 1; padding: 0 0 0 3px; color: #000; }
.floor + .sep { margin: 0 -3px; }
.panes { flex: 1; display: flex; min-height: 0; }
.comps { flex: 0 0 184px; display: flex; flex-direction: column; padding-top: 6px; border-right: 1px solid #999; margin-bottom: 2px; }
.find { display: flex; align-items: center; height: 26px; background: #fff; gap: 4px; flex: none; }
.find input { width: 158px; height: 24px; border: 1px solid #7a7a7a; font: inherit; padding: 0 2px 4px; background: #fff; margin-left: 1px; }
.find input::placeholder { color: #777; opacity: 1; }
.list { flex: 1; border: 1px solid #828790; background: #fff; padding-top: 1px; }
.root { display: flex; align-items: center; height: 16px; padding-left: 3px; }
.root i { width: 3px; margin: 0 1px; border-top: 1px dotted #808080; }
.root .sim { margin-left: 4px; }
.list li { height: 16px; display: flex; align-items: center; }
.list .v { height: 16px; border-left: 1px dotted #808080; margin-left: 31px; }
.list li:last-child .v { height: 8px; align-self: flex-start; }
.list .hz { width: 9px; border-top: 1px dotted #808080; }
.hit { display: flex; align-items: center; height: 16px; padding: 0 5px 0 1px; }
.hit .sim { margin-left: 5px; }
.on .hit { background: #316ac5; }

.props { flex: 1; min-width: 0; margin: 2px 0 3px 3px; background: #fff; border: 1px solid #ddd; display: flex; flex-direction: column; }
.tabs { height: 20px; border-bottom: 1px solid #dcdcdc; flex: none; display: flex; }
.tabs button { height: 20px; width: 63px; border-right: 1px solid #dcdcdc; background: #fff; }
.sheet { flex: 1; margin: 3px 3px 2px; border: 1px solid #a0a0a8; padding: 1px 0; position: relative; overflow: hidden; }
table { border-collapse: collapse; table-layout: fixed; width: 465px; }
th, td { border: 1px solid #c0c0c0; padding: 0; height: 19px; line-height: 16px; font-weight: 400; white-space: nowrap; }
thead th { height: 22px; background: linear-gradient(#fdfdfd, #ececec); border-top: 0; }
th.no { width: 21px; }
th.nm { width: 191px; }
th.val { width: 222px; background: linear-gradient(#f8d69a, #f1c05c); color: #5a0055; }
th.add { width: 31px; }
tbody th { background: linear-gradient(90deg, #fff, #eee); }
th:first-child { border-left: 0; }
.name { padding-left: 19px; }
.value { padding-left: 2px; }
.grade { display: inline-block; width: 13px; height: 13px; vertical-align: middle; }
.key .name { color: #00f; }
.cur th { background: #ffcf87; color: #5a0055; }
.cur .name { background: #0078d7; color: #fff; }
.cur .value { background: #d9e9f8; }
.more .name { color: #808080; padding-left: 2px; }
.more .name button { width: 13px; height: 13px; border: 1px solid #a0a0a0; color: #000; line-height: 11px; margin-right: 4px; vertical-align: middle; }
.tick { text-align: center; }
.tick input { appearance: none; width: 13px; height: 13px; border: 1px solid #333; background: #fff; margin: 0; display: inline-block; vertical-align: middle; }
.marks { position: absolute; left: 0; top: 0; width: 800px; height: 200px; pointer-events: none; }
.memo { position: absolute; margin: 0; color: #f00; font-size: 23px; line-height: 30px; white-space: nowrap; }
.one { left: 424px; top: 13px; }
.two { left: 440px; top: 74px; }

.status { height: 21px; display: flex; gap: 2px; padding-bottom: 1px; background: #f0f0f0; }
.status > span { border: 1px solid #d4d4d4; background: linear-gradient(#fff, #f1f1f1); padding-left: 1px; line-height: 18px; white-space: nowrap; }
.c1 { flex: 0 0 148px; }
.c2 { flex: 0 0 78px; }
.c3 { flex: 0 0 98px; }
.c4 { flex: 0 0 48px; }
.c5 { flex: 1; }
.c6 { flex: 0 0 70px; }

.taskbar { height: 40px; background: #030d11; display: flex; align-items: stretch; color: #fff; flex: none; }
.taskbar button { display: flex; align-items: center; justify-content: center; }
.start { width: 48px; background: #000; }
.cortana { width: 344px; background: #333; display: flex; align-items: center; padding: 0 8px; }
.cortana input { flex: 1; min-width: 0; background: none; border: 0; color: #aaa; font: 14px/20px "Open Sans", "Noto Sans CJK SC", sans-serif; padding: 0 4px; }
.cortana input::placeholder { color: #a0a0a0; opacity: 1; }
.wide { width: 50px; }
.apps { display: flex; margin-left: 4px; }
.app { width: 38px; border-bottom: 2px solid transparent; border-top: 2px solid transparent; }
.app.run { width: 30px; margin: 0 4px; border-bottom-color: #76b9ed; }
.app.active { background: #364247; border-color: #364247; border-bottom-color: #76b9ed; }
.links { align-self: center; margin-left: 10px; width: 36px; }
.cpu, .clock { display: flex; flex-direction: column; align-items: center; justify-content: center; line-height: 17px; width: 64px; }
.tray { display: flex; align-items: center; flex: 0 0 180px; margin-left: 6px; }
.tray .keys { margin: 0 4px 0 3px; }
.tray b { font-size: 13px; font-weight: 500; width: 24px; text-align: center; margin-right: 5px; }
.clock { width: 72px; margin-left: 6px; }
.notice { flex: 1; position: relative; }
.notice em { position: absolute; font: 600 11px/14px "Open Sans", sans-serif; right: 23px; bottom: 6px; }
</style>
